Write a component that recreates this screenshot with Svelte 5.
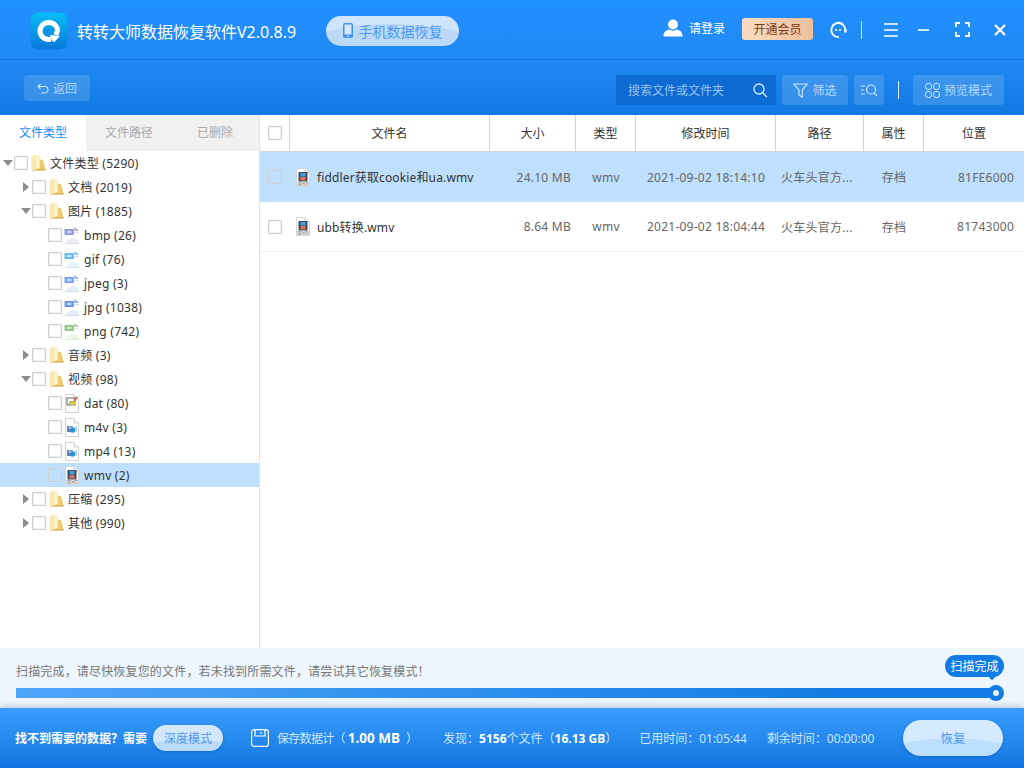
<script>
	const tree = [
		{ label: '文件类型 (5290)', level: 0, arrow: 'open', icon: 'folder' },
		{ label: '文档 (2019)', level: 1, arrow: 'closed', icon: 'folder' },
		{ label: '图片 (1885)', level: 1, arrow: 'open', icon: 'folder' },
		{ label: 'bmp (26)', level: 2, icon: 'image', tint: '#8f8fd6' },
		{ label: 'gif (76)', level: 2, icon: 'image', tint: '#5db2ee' },
		{ label: 'jpeg (3)', level: 2, icon: 'image', tint: '#6f9be8' },
		{ label: 'jpg (1038)', level: 2, icon: 'image', tint: '#5b93e2' },
		{ label: 'png (742)', level: 2, icon: 'image', tint: '#8fc07f' },
		{ label: '音频 (3)', level: 1, arrow: 'closed', icon: 'folder' },
		{ label: '视频 (98)', level: 1, arrow: 'open', icon: 'folder' },
		{ label: 'dat (80)', level: 2, icon: 'dat' },
		{ label: 'm4v (3)', level: 2, icon: 'media' },
		{ label: 'mp4 (13)', level: 2, icon: 'media' },
		{ label: 'wmv (2)', level: 2, icon: 'wmv', selected: true },
		{ label: '压缩 (295)', level: 1, arrow: 'closed', icon: 'folder' },
		{ label: '其他 (990)', level: 1, arrow: 'closed', icon: 'folder' }
	];

	const columns = ['文件名', '大小', '类型', '修改时间', '路径', '属性', '位置'];

	const files = [
		{ name: 'fiddler获取cookie和ua.wmv', size: '24.10 MB', type: 'wmv', time: '2021-09-02 18:14:10', path: '火车头官方...', attr: '存档', pos: '81FE6000', selected: true },
		{ name: 'ubb转换.wmv', size: '8.64 MB', type: 'wmv', time: '2021-09-02 18:04:44', path: '火车头官方...', attr: '存档', pos: '81743000' }
	];
</script>

{#snippet folderIcon()}
	<svg class="ico" width="15" height="18" viewBox="0 0 15 18">
		<path d="M0.5 2.5 L5.5 0.5 V15 L0.5 17.5 Z" fill="#f8e9ae" />
		<path d="M5.5 1.5 H8.5 V5 L12.5 6.5 L14.5 16.5 H3 L5.5 14.5 Z" fill="#efcc6a" />
		<path d="M5.5 0.5 L8.5 1.5 V14 L5.5 15 Z" fill="#fff8d8" />
		<path d="M0.5 17.5 L5.5 15 H14.5 V16.5 H3.5 L1.5 17.5 Z" fill="#dcb860" />
	</svg>
{/snippet}

{#snippet imageIcon(tint)}
	<svg class="ico" width="16" height="18" viewBox="0 0 16 18">
		<path d="M10.5 1 L15 5 H10.5 Z" fill={tint} opacity=".8" />
		<rect x="0.5" y="3" width="9.5" height="6" fill={tint} opacity=".9" />
		<rect x="3" y="5" width="4.5" height="2" fill="#fff" opacity=".6" />
		<path d="M10.5 6.5 H15" stroke={tint} opacity=".3" />
		<path d="M2 17 C3 14 5 13 7 13 C8 11 11 11 12 13 C14 13 15 15 15 17 Z" fill={tint} opacity=".16" />
		<path d="M1 17.5 H15" stroke={tint} opacity=".3" />
	</svg>
{/snippet}

{#snippet pageBase()}
	<path d="M1.5 0.5 H10 L14.5 5 V18.5 H1.5 Z" fill="#fff" stroke="#d4d4d4" />
	<path d="M10 0.5 V5 H14.5" fill="#f0f0f0" stroke="#d4d4d4" />
{/snippet}

{#snippet datIcon()}
	<svg class="ico" width="16" height="19" viewBox="0 0 16 19">
		{@render pageBase()}
		<rect x="3" y="4" width="8" height="7" fill="#fff" stroke="#666" />
		<rect x="5" y="7" width="6" height="4" fill="#a5cc50" />
		<rect x="7" y="8" width="4" height="3" fill="#f2c230" />
		<path d="M10 7 L13 3" stroke="#e0483a" stroke-width="1.4" />
	</svg>
{/snippet}

{#snippet mediaIcon()}
	<svg class="ico" width="16" height="19" viewBox="0 0 16 19">
		{@render pageBase()}
		<rect x="3" y="8" width="5.5" height="6" fill="#6d7f98" />
		<circle cx="8.5" cy="12" r="2.8" fill="#2b8ddb" />
		<circle cx="6" cy="9.5" r="1.6" fill="#9cc0e4" />
		<path d="M11.8 8 Q13.3 11 11.8 14" fill="none" stroke="#8dbde8" />
	</svg>
{/snippet}

{#snippet wmvIcon()}
	<svg class="ico" width="16" height="19" viewBox="0 0 16 19">
		{@render pageBase()}
		<rect x="3.5" y="4" width="9" height="9.5" fill="#414b55" />
		<rect x="5.5" y="5" width="5" height="3.5" fill="#3fa0e8" />
		<rect x="5.5" y="9" width="5" height="3.5" fill="#d9705a" />
		<rect x="2.5" y="14" width="11" height="3.5" fill="#8f949a" />
		<path d="M3 17 V14.5 L4.5 16 L6 14.5 V17 M7.5 14.5 V17 H10 V14.5 Z M11 14.5 L12 17 L13 14.5" fill="none" stroke="#fff" stroke-width=".7" />
	</svg>
{/snippet}

<div class="app">
	<header class="titlebar">
		<svg class="logo" width="38" height="38" viewBox="0 0 38 38">
			<defs>
				<linearGradient id="logoFill" x1="0" y1="0" x2="0" y2="1">
					<stop offset="0" stop-color="#07bdf5" />
					<stop offset="1" stop-color="#0a78dc" />
				</linearGradient>
			</defs>
			<rect width="37" height="37" x="0.5" y="0.5" rx="8" fill="url(#logoFill)" />
			<path d="M19 10.5 C13.5 10.5 10 14.5 10 19 C10 24 14 27.5 19 27.5 L21 27.5" fill="none" stroke="#fff" stroke-width="5" />
			<path d="M19 10.5 C24 10.5 27.5 14.5 27.5 18.5 L26 23" fill="none" stroke="#fff" stroke-width="5" />
			<path d="M20 23 L30 24 L24.5 30 L22 29 Z" fill="#fff" />
		</svg>
		<span class="app-title">转转大师数据恢复软件V2.0.8.9</span>
		<button class="phone-pill">
			<svg width="10" height="15" viewBox="0 0 10 15">
				<rect x="0" y="0" width="10" height="15" rx="2" fill="#3f94ee" />
				<rect x="1.5" y="1.5" width="7" height="10" fill="#d4e7fb" />
				<circle cx="5" cy="13.2" r=".8" fill="#fff" />
			</svg>
			<span>手机数据恢复</span>
		</button>

		<div class="account">
			<svg width="20" height="18" viewBox="0 0 20 18">
				<circle cx="10" cy="5.5" r="5" fill="#fff" />
				<path d="M0.5 17.5 C0.5 13 3 11 6.5 10.5 C8 12 12 12 13.5 10.5 C17 11 19.5 13 19.5 17.5 Z" fill="#fff" />
			</svg>
			<span>请登录</span>
		</div>
		<button class="vip">开通会员</button>
		<svg class="chat" width="18" height="18" viewBox="0 0 18 18">
			<path d="M13.5 3 A7.2 7.2 0 1 0 10 16.2" fill="none" stroke="#fff" stroke-width="1.8" />
			<path d="M9 1.8 A7.2 7.2 0 0 1 16.2 9" fill="none" stroke="#fff" stroke-width="1.8" />
			<circle cx="7" cy="9" r="1.1" fill="#fff" />
			<circle cx="11" cy="9" r="1.1" fill="#fff" />
			<rect x="15.2" y="8" width="2.4" height="3.5" fill="#fff" />
		</svg>
		<span class="vline"></span>
		<svg class="win menu" width="14" height="14" viewBox="0 0 14 14">
			<path d="M0 1 H14 M0 7 H14 M0 13 H14" stroke="#fff" stroke-width="1.6" />
		</svg>
		<svg class="win mini" width="11" height="14" viewBox="0 0 11 14">
			<path d="M0 7 H11" stroke="#fff" stroke-width="1.6" />
		</svg>
		<svg class="win full" width="15" height="15" viewBox="0 0 15 15">
			<path d="M1 5 V1 H5 M10 1 H14 V5 M14 10 V14 H10 M5 14 H1 V10" fill="none" stroke="#fff" stroke-width="1.8" />
		</svg>
		<svg class="win shut" width="12" height="12" viewBox="0 0 12 12">
			<path d="M1 1 L11 11 M11 1 L1 11" stroke="#fff" stroke-width="2.2" />
		</svg>
	</header>

	<div class="toolbar">
		<button class="tool back">
			<svg width="12" height="11" viewBox="0 0 12 11">
				<path d="M3.5 1 L1 3.5 L3.5 6 M1 3.5 H8 C10 3.5 11 5 11 6.5 C11 8.5 9.5 10 8 10 H4" fill="none" stroke="#cfe4fb" stroke-width="1.1" />
			</svg>
			<span>返回</span>
		</button>
		<div class="search">
			<span>搜索文件或文件夹</span>
			<svg width="15" height="15" viewBox="0 0 15 15">
				<circle cx="6" cy="6" r="5" fill="none" stroke="#dcebfb" stroke-width="1.3" />
				<path d="M9.8 9.8 L14 14" stroke="#dcebfb" stroke-width="1.3" />
			</svg>
		</div>
		<button class="tool filter">
			<svg width="15" height="15" viewBox="0 0 15 15">
				<path d="M0.7 1 H14.3 L9.3 7 V14 L6 12 V7 Z" fill="none" stroke="#cfe4fb" stroke-width="1.2" />
			</svg>
			<span>筛选</span>
		</button>
		<button class="tool find">
			<svg width="17" height="12" viewBox="0 0 17 12">
				<path d="M0 2 H4 M0 6 H3 M0 10 H4" stroke="#cfe4fb" />
				<circle cx="10" cy="5.5" r="4.5" fill="none" stroke="#cfe4fb" stroke-width="1.2" />
				<path d="M13 9 L16 12" stroke="#cfe4fb" stroke-width="1.2" />
			</svg>
		</button>
		<span class="vline tool-line"></span>
		<button class="tool preview">
			<svg width="15" height="15" viewBox="0 0 15 15" fill="none" stroke="#cfe4fb">
				<rect x="0.5" y="0.5" width="6" height="6" rx="2.5" />
				<rect x="8.5" y="0.5" width="6" height="6" rx="2.5" />
				<rect x="0.5" y="8.5" width="6" height="6" rx="2.5" />
				<rect x="8.5" y="8.5" width="6" height="6" rx="2.5" />
			</svg>
			<span>预览模式</span>
		</button>
	</div>

	<main class="body">
		<aside class="side">
			<div class="tabs">
				<span class="tab active">文件类型</span>
				<span class="tab">文件路径</span>
				<span class="tab">已删除</span>
			</div>
			<ul class="tree">
				{#each tree as node}
					<li class="node lv{node.level}" class:selected={node.selected}>
						{#if node.arrow}
							<i class="arrow {node.arrow}"></i>
						{/if}
						<i class="check"></i>
						{#if node.icon === 'folder'}
							{@render folderIcon()}
						{:else if node.icon === 'image'}
							{@render imageIcon(node.tint)}
						{:else if node.icon === 'dat'}
							{@render datIcon()}
						{:else if node.icon === 'media'}
							{@render mediaIcon()}
						{:else}
							{@render wmvIcon()}
						{/if}
						<span class="node-label">{node.label}</span>
					</li>
				{/each}
			</ul>
		</aside>

		<section class="list">
			<div class="grid head">
				<div class="cell"><i class="check"></i></div>
				{#each columns as col}
					<div class="cell">{col}</div>
				{/each}
			</div>
			{#each files as file}
				<div class="grid row" class:selected={file.selected}>
					<div class="cell"><i class="check"></i></div>
					<div class="cell name">{@render wmvIcon()}<span>{file.name}</span></div>
					<div class="cell size">{file.size}</div>
					<div class="cell">{file.type}</div>
					<div class="cell">{file.time}</div>
					<div class="cell path">{file.path}</div>
					<div class="cell">{file.attr}</div>
					<div class="cell pos">{file.pos}</div>
				</div>
			{/each}
		</section>
	</main>

	<div class="scan">
		<p>扫描完成，请尽快恢复您的文件，若未找到所需文件，请尝试其它恢复模式！</p>
		<div class="bar">
			<span class="bubble">扫描完成</span>
			<span class="knob"></span>
		</div>
	</div>

	<footer class="foot">
		<b class="hint">找不到需要的数据？需要</b>
		<button class="deep">深度模式</button>
		<svg class="save" width="18" height="18" viewBox="0 0 18 18" fill="none" stroke="#fff" stroke-width="1.2">
			<rect x="0.6" y="0.6" width="16.8" height="16.8" rx="2.5" />
			<path d="M4 1 V7 H14 V1 M10 3 V5" />
		</svg>
		<span class="saved">保存数据计（</span>
		<b class="amount">1.00 MB</b>
		<span class="paren">）</span>
		<span class="found">发现：<b>5156</b>个文件（<b>16.13 GB</b>）</span>
		<span class="time used">已用时间：01:05:44</span>
		<span class="time left">剩余时间：00:00:00</span>
		<button class="recover">恢复</button>
	</footer>
</div>

<style>
	:global(body) {
		margin: 0;
		background: #fff;
	}
	.app {
		width: 1024px;
		height: 768px;
		display: flex;
		flex-direction: column;
		overflow: hidden;
		font-family: "Noto Sans", "Noto Sans CJK SC", sans-serif;
		font-size: 12px;
		color: #333;
	}
	button {
		font: inherit;
		border: 0;
		padding: 0;
	}
	i {
		display: block;
		font-style: normal;
	}
	.ico {
		flex: none;
	}

	.titlebar {
		height: 60px;
		flex: none;
		box-sizing: border-box;
		border-bottom: 1px solid #1a78d9;
		background: linear-gradient(#2090ff, #2089f3);
		display: flex;
		align-items: center;
		padding-left: 30px;
		color: #fff;
	}
	.logo {
		flex: none;
		margin-top: 3px;
	}
	.app-title {
		margin-left: 9px;
		margin-top: 2px;
		font-size: 16px;
		white-space: nowrap;
	}
	.phone-pill {
		margin-left: 30px;
		margin-top: 2px;
		width: 133px;
		height: 30px;
		border-radius: 15px;
		background:
			radial-gradient(ellipse 90px 22px at 50% 100%, #bcd9f8 98%, transparent 100%),
			#d1e5fa;
		color: #4d9bf1;
		font-size: 14px;
		display: flex;
		align-items: center;
		justify-content: center;
		gap: 6px;
	}
	.account {
		margin-left: auto;
		display: flex;
		align-items: center;
		gap: 6px;
		margin-top: -3px;
	}
	.vip {
		margin-left: 17px;
		width: 71px;
		height: 22px;
		border-radius: 3px;
		background: linear-gradient(90deg, #f9dcc1, #eebf9d);
		color: #7b3a12;
		margin-top: -2px;
	}
	.chat {
		margin-left: 16px;
		flex: none;
	}
	.vline {
		width: 1px;
		height: 18px;
		background: #dcebfb;
		flex: none;
		margin-left: 14px;
	}
	.win {
		flex: none;
	}
	.menu {
		margin-left: 22px;
	}
	.mini {
		margin-left: 20px;
	}
	.full {
		margin-left: 26px;
	}
	.shut {
		margin-left: 24px;
		margin-right: 18px;
	}

	.toolbar {
		height: 55px;
		flex: none;
		box-sizing: border-box;
		background: linear-gradient(#1f88f1, #127ae2);
		display: flex;
		align-items: center;
		padding: 5px 20px 0 24px;
		color: #a8cff9;
	}
	.tool {
		height: 30px;
		border-radius: 3px;
		background: rgba(255, 255, 255, 0.14);
		color: #b5d7fb;
		display: flex;
		align-items: center;
		justify-content: center;
		gap: 4px;
	}
	.back {
		width: 66px;
		height: 26px;
		align-self: flex-start;
		margin-top: 10px;
	}
	.search {
		margin-left: auto;
		width: 160px;
		height: 30px;
		box-sizing: border-box;
		border-radius: 2px;
		background: #0c6bd2;
		color: #9cc0e8;
		display: flex;
		align-items: center;
		justify-content: space-between;
		padding: 0 8px 0 12px;
	}
	.filter {
		width: 66px;
		margin-left: 6px;
	}
	.find {
		width: 30px;
		margin-left: 6px;
	}
	.tool-line {
		margin-left: 14px;
	}
	.preview {
		width: 91px;
		margin-left: 14px;
	}

	.body {
		flex: 1;
		min-height: 0;
		display: flex;
	}
	.side {
		width: 260px;
		flex: none;
		box-sizing: border-box;
		border-right: 1px solid #e3e3e3;
		display: flex;
		flex-direction: column;
	}
	.tabs {
		height: 36px;
		flex: none;
		display: flex;
		background: #f1f1f1;
	}
	.tab {
		width: 86px;
		box-sizing: border-box;
		padding-bottom: 2px;
		display: flex;
		align-items: center;
		justify-content: center;
		color: #aaa;
	}
	.tab.active {
		background: #fff;
		color: #1a8bfa;
	}
	.tree {
		list-style: none;
		margin: 0;
		padding: 0;
	}
	.node {
		position: relative;
		height: 24px;
		display: flex;
		align-items: center;
		color: #333;
		white-space: nowrap;
		letter-spacing: 0.25px;
	}
	.node.selected {
		background: #bfe0fd;
	}
	.lv0 {
		padding-left: 14px;
	}
	.lv1 {
		padding-left: 32px;
	}
	.lv2 {
		padding-left: 48px;
	}
	.check {
		width: 12px;
		height: 12px;
		flex: none;
		background: #fff;
		border: 1px solid #cfcfcf;
		box-shadow: inset 0 0 0 1px #f3f3f3;
	}
	.selected .check {
		background: transparent;
		box-shadow: none;
	}
	.node .ico {
		margin-left: 3px;
	}
	.lv2 .ico {
		margin-left: 2px;
	}
	.node-label {
		margin-left: 4px;
	}
	.arrow {
		position: absolute;
		width: 0;
		height: 0;
	}
	.arrow.open {
		margin-left: -12px;
		border-left: 5px solid transparent;
		border-right: 5px solid transparent;
		border-top: 6px solid #8c8c8c;
	}
	.lv0 .arrow.open {
		left: 15px;
	}
	.lv1 .arrow.open {
		left: 33px;
	}
	.arrow.closed {
		left: 23px;
		border-top: 5px solid transparent;
		border-bottom: 5px solid transparent;
		border-left: 6px solid #8c8c8c;
	}

	.list {
		flex: 1;
		min-width: 0;
	}
	.grid {
		display: grid;
		grid-template-columns: 30px 200px 86px 60px 140px 88px 60px 100px;
	}
	.cell {
		display: flex;
		align-items: center;
		justify-content: center;
		min-width: 0;
		box-sizing: border-box;
	}
	.head {
		height: 37px;
		box-sizing: border-box;
		border-bottom: 1px solid #cdd5dd;
		color: #333;
	}
	.head .cell {
		border-right: 1px solid #cdd5dd;
	}
	.head .cell:last-child {
		border-right: 0;
	}
	.row {
		height: 50px;
		box-sizing: border-box;
		border-bottom: 1px solid #f0f0f0;
		color: #666;
		letter-spacing: 0.25px;
	}
	.row.selected {
		background: #bfe0fd;
		border-bottom: 0;
	}
	.name {
		justify-content: flex-start;
		padding-left: 5px;
		gap: 6px;
		color: #333;
		white-space: nowrap;
		letter-spacing: 0.14px;
	}
	.size {
		justify-content: flex-end;
		padding-right: 5px;
	}
	.path {
		justify-content: flex-start;
		padding-left: 5px;
	}
	.pos {
		justify-content: flex-end;
		padding-right: 10px;
	}

	.scan {
		height: 60px;
		flex: none;
		box-sizing: border-box;
		background: #edf5fd;
		padding: 17px 29px 0 16px;
		color: #777;
	}
	.scan p {
		margin: 0;
		line-height: 14px;
		letter-spacing: 0.17px;
	}
	.bar {
		position: relative;
		height: 10px;
		margin-top: 9px;
		background: linear-gradient(90deg, #4fa5f8, #127ce4 85%);
	}
	.bubble {
		position: absolute;
		right: -9px;
		top: -33px;
		width: 59px;
		height: 22px;
		border-radius: 11px;
		background: #127ce4;
		color: #fff;
		display: flex;
		align-items: center;
		justify-content: center;
	}
	.bubble::after {
		content: "";
		position: absolute;
		right: 9px;
		bottom: -2px;
		width: 6px;
		height: 6px;
		background: #127ce4;
		transform: rotate(45deg);
	}
	.knob {
		position: absolute;
		right: -9px;
		top: -3px;
		width: 6px;
		height: 6px;
		border-radius: 50%;
		background: #e8f2fd;
		border: 5px solid #127ce4;
		box-sizing: content-box;
	}

	.foot {
		height: 60px;
		flex: none;
		box-sizing: border-box;
		background: linear-gradient(#3a9dfd, #1176e0);
		box-shadow: 0 -3px 5px rgba(100, 120, 150, 0.25);
		position: relative;
		display: flex;
		align-items: center;
		padding-left: 15px;
		color: #d0e6fd;
		white-space: nowrap;
	}
	.foot b {
		color: #fff;
	}
	.hint {
		font-weight: 700;
	}
	.deep {
		margin-left: 6px;
		width: 70px;
		height: 26px;
		border-radius: 13px;
		background:
			radial-gradient(ellipse 50px 12px at 50% 100%, #bcdcfb 98%, transparent 100%),
			#d4e8fc;
		color: #4d9bf1;
		box-shadow: 0 1px 3px rgba(0, 50, 120, 0.3);
	}
	.save {
		margin-left: 28px;
		flex: none;
	}
	.saved {
		margin-left: 8px;
		letter-spacing: -0.7px;
	}
	.amount {
		margin-left: 3px;
		font-size: 13.5px;
	}
	.paren {
		margin-left: 6px;
	}
	.found {
		margin-left: 25px;
	}
	.used {
		margin-left: 22px;
	}
	.left {
		margin-left: 20px;
	}
	.recover {
		margin-left: auto;
		margin-right: 21px;
		width: 100px;
		height: 36px;
		padding-bottom: 2px;
		border-radius: 18px;
		background:
			radial-gradient(ellipse 70px 18px at 50% 100%, #bcdffd 98%, transparent 100%),
			#d6eafd;
		color: #4d9bf1;
		font-size: 12.5px;
		box-shadow: 0 1px 3px rgba(0, 50, 120, 0.3);
	}
</style>
